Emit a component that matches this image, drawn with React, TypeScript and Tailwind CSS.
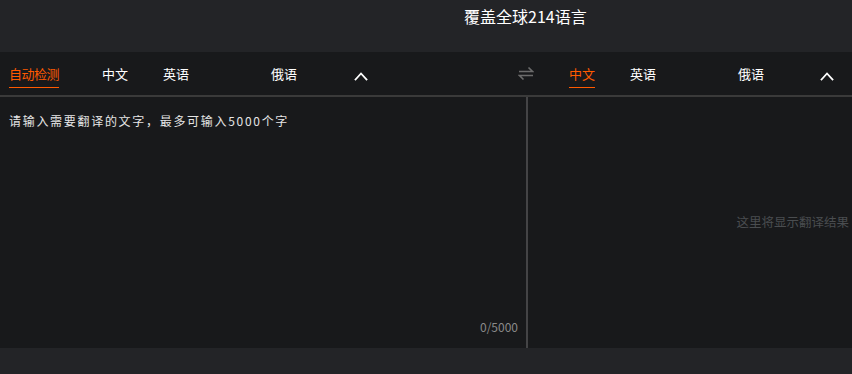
import React from 'react';

const FONT = { fontFamily: '"Noto Sans CJK SC", "Noto Sans", sans-serif' };

function Tab({ label, active, className = '' }: { label: string; active?: boolean; className?: string }) {
  return (
    <div className={`relative h-full flex items-center text-[13px] ${active ? 'text-[#ff5a00]' : 'text-white'} ${className}`}>
      {label}
      {active && <div className="absolute left-0 right-0 bottom-[7px] h-[1.5px] bg-[#ff5a00]" />}
    </div>
  );
}

function ChevronUp({ className = '' }: { className?: string }) {
  return (
    <svg className={className} width="14" height="10" viewBox="0 0 14 10" fill="none" stroke="#ffffff" strokeWidth="1.8" strokeLinecap="square">
      <path d="M1.5 8.5 L7 2.5 L12.5 8.5" />
    </svg>
  );
}

function SwapIcon() {
  return (
    <svg width="16" height="15" viewBox="0 0 16 15" fill="none" stroke="#6b6b6b" strokeWidth="1.6">
      <path d="M1 5.5 H14.5 L10.5 1.5" />
      <path d="M15 9.5 H1.5 L5.5 13.5" />
    </svg>
  );
}

export default function App() {
  return (
    <div className="w-full h-[374px] bg-[#232427] flex flex-col" style={FONT}>
      {/* 헤더 */}
      <header className="h-[52px] flex pl-[464px] pt-[5px]">
        <span className="text-[16px] leading-[22px] text-white">覆盖全球214语言</span>
      </header>

      {/* 언어 탭 */}
      <div className="h-[45px] bg-[#18191b] border-b-2 border-[#3a3a3a] flex items-stretch">
        <div className="w-[510px] flex items-center pl-[9px]">
          <Tab label="自动检测" active className="tracking-[-0.5px]" />
          <Tab label="中文" className="ml-[43px]" />
          <Tab label="英语" className="ml-[35px]" />
          <Tab label="俄语" className="ml-[82px]" />
          <ChevronUp className="ml-[57px] mt-[4px]" />
        </div>
        <div className="w-[31px] flex items-center justify-center">
          <SwapIcon />
        </div>
        <div className="flex-1 flex items-center pl-[28px]">
          <Tab label="中文" active />
          <Tab label="英语" className="ml-[35px]" />
          <Tab label="俄语" className="ml-[82px]" />
          <ChevronUp className="ml-[56px] mt-[4px]" />
        </div>
      </div>

      {/* 입력 / 결과 */}
      <div className="h-[251px] bg-[#18191b] flex">
        <div className="w-[528px] border-r-2 border-[#444446] flex flex-col pl-[9px] pr-[8px] pt-[15px] pb-[13px]">
          <div className="text-[12px] leading-[18px] tracking-[1.7px] text-[#e6e6e6]">
            请输入需要翻译的文字，最多可输入5000个字
          </div>
          <div className="mt-auto self-end text-[12px] leading-[16px] text-[#8a8a8a]">0/5000</div>
        </div>
        <div className="flex-1 flex items-center justify-end pr-[3px]">
          <span className="text-[12.5px] text-[#4a4d50]">这里将显示翻译结果</span>
        </div>
      </div>

      <div className="flex-1" />
    </div>
  );
}
